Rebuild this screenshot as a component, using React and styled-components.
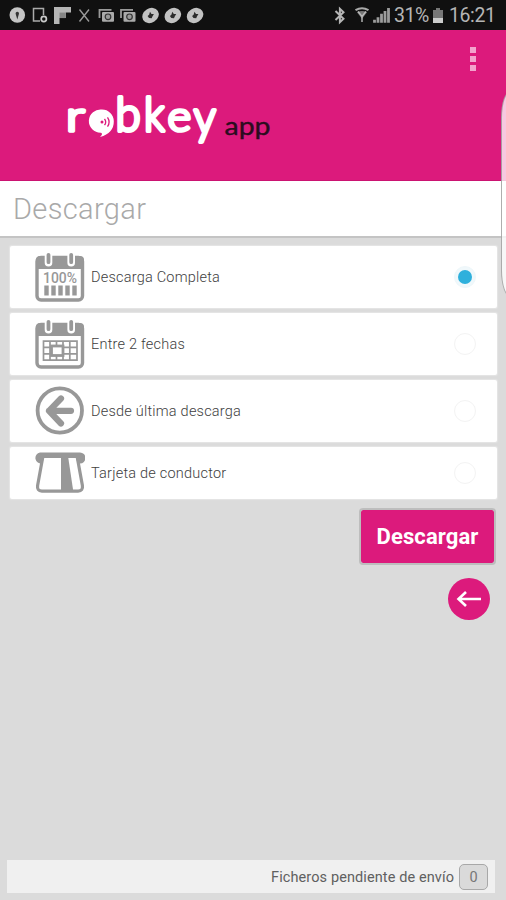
import React, { useState } from "react";
import styled, { createGlobalStyle } from "styled-components";

const GlobalStyle = createGlobalStyle`
  * {
    box-sizing: border-box;
  }
  body {
    margin: 0;
    background: #dbdbdb;
    font-family: Roboto, "Liberation Sans", sans-serif;
  }
`;

const Screen = styled.div`
  position: relative;
  display: flex;
  flex-direction: column;
  width: 506px;
  height: 900px;
  overflow: hidden;
  background: #dbdbdb;
`;

const StatusBar = styled.div`
  display: flex;
  justify-content: space-between;
  height: 30px;
  background: #101010;
`;

const StatusGroup = styled.div`
  display: flex;
  align-items: center;
  height: 31px;
  color: #b5b5b5;
`;

const StatusText = styled.span`
  font-size: 19.5px;
  line-height: 30px;
  letter-spacing: -0.4px;
  width: ${props => props.$width};
  margin-right: ${props => props.$gap};
  white-space: nowrap;
`;

const Header = styled.header`
  display: flex;
  justify-content: space-between;
  align-items: flex-start;
  height: 151px;
  padding: 15px 26px 0 60px;
  background: #dc1a7c;
  border-bottom: 1px solid #cb1371;
`;

const Logo = styled.svg`
  display: block;
  margin-top: 40px;
`;

const MenuButton = styled.button`
  display: flex;
  flex-direction: column;
  gap: 3px;
  padding: 2px 4px;
  border: none;
  background: none;
`;

const MenuDot = styled.span`
  width: 6px;
  height: 6px;
  background: #f3a3cd;
`;

const TitleBar = styled.div`
  height: 57px;
  padding: 0 13px;
  background: #fff;
  border-bottom: 2px solid #c4c4c4;
`;

const Title = styled.h1`
  margin: 0;
  color: #a9a9a9;
  font-size: 29px;
  font-weight: 300;
  line-height: 56px;
  letter-spacing: 0.35px;
`;

const Options = styled.div`
  display: flex;
  flex-direction: column;
  gap: 5px;
  padding: 8px 9px 0 10px;
`;

const OptionRow = styled.div`
  display: flex;
  align-items: center;
  height: ${props => props.$height || "62px"};
  padding: 0 21px 0 25px;
  background: #fff;
  border-radius: 2px;
  box-shadow: 0 0 1px 1px #e5e5e5;
`;

const OptionIcon = styled.svg`
  flex: none;
  width: 50px;
  height: ${props => props.$height || "50px"};
  margin-right: 6px;
`;

const OptionLabel = styled.span`
  flex: 1;
  color: #3e3e3e;
  font-size: 14.5px;
  font-weight: 300;
  letter-spacing: 0.22px;
`;

const Radio = styled.span`
  display: flex;
  align-items: center;
  justify-content: center;
  width: 22px;
  height: 22px;
  border: 1px solid ${props => (props.$checked ? "#eef7fa" : "#f3f3f3")};
  border-radius: 50%;
  background: ${props => (props.$checked ? "#f0f8fb" : "#fff")};
`;

const RadioDot = styled.span`
  width: 14px;
  height: 14px;
  border-radius: 50%;
  background: #2fb0dc;
`;

const Actions = styled.div`
  display: flex;
  flex-direction: column;
  align-items: flex-end;
  padding: 9px 10px 0 0;
`;

const DownloadButton = styled.button`
  width: 137px;
  height: 57px;
  padding: 0;
  border: 2px solid #bdbdbd;
  border-radius: 4px;
  background: #dc1a7c;
  background-clip: padding-box;
  color: #fff;
  font-family: inherit;
  font-size: 22px;
  font-weight: 700;
  letter-spacing: 0.1px;
`;

const BackButton = styled.button`
  display: flex;
  align-items: center;
  justify-content: center;
  width: 42px;
  height: 42px;
  margin: 13px 6px 0 0;
  padding: 0;
  border: none;
  border-radius: 50%;
  background: #dc1a7c;
`;

const Footer = styled.footer`
  display: flex;
  align-items: center;
  justify-content: flex-end;
  height: 33px;
  margin: auto 11px 7px 7px;
  padding-right: 7px;
  background: #f0f0f0;
`;

const FooterText = styled.span`
  color: #606060;
  font-size: 14.5px;
  font-weight: 400;
  line-height: 20px;
  padding-top: 2px;
  letter-spacing: 0.1px;
`;

const Counter = styled.span`
  width: 29px;
  height: 26px;
  margin-left: 5px;
  border: 1.5px solid #a8a8a8;
  border-radius: 5px;
  background: #dadada;
  color: #777;
  font-size: 14.5px;
  line-height: 25px;
  text-align: center;
`;

// pull handle of the edge panel, floats over the right side of the screen
const EdgeHandle = styled.div`
  position: absolute;
  top: 91px;
  right: -14px;
  width: 19px;
  height: 206px;
  border: 1px solid rgba(130, 130, 130, 0.65);
  border-radius: 10px / 28px;
  background: rgba(255, 255, 255, 0.76);
`;

const GREY = "#989898";

const NotificationIcons = () => (
  <svg width="210" height="31" viewBox="0 0 210 31">
    <circle cx="17.3" cy="15" r="7.8" fill="#c4c4c4" />
    <path d="M17.3 19.5l-1.6-5.4a1.7 1.7 0 1 1 3.2 0z" fill="#333" />
    <path d="M40 21h-6.5V8.5h10V15" fill="none" stroke="#aaa" strokeWidth="1.5" />
    <circle cx="43.8" cy="19" r="2.6" fill="none" stroke="#c8c8c8" strokeWidth="1.7" />
    <path d="M54 7h17v5.6h-5.2v5.5H59.5V24H54z" fill="#b5b5b5" />
    <path d="M59.5 12.6h6v5.5h-6z" fill="#858585" />
    <path d="M79.5 9.5l9.5 12M89 9.5l-9.5 12" stroke="#999" strokeWidth="1.4" />
    {[98.5, 120].map(x => (
      <g key={x} transform={`translate(${x} 0)`}>
        <path d="M1 18V9.8h12" fill="none" stroke="#999" strokeWidth="1.8" />
        <rect x="3.5" y="12" width="12" height="9.8" rx="1" fill="#aaa" />
        <circle cx="9.5" cy="16.8" r="2.8" fill="#999" stroke="#333" strokeWidth="1.2" />
      </g>
    ))}
    {[150.5, 172.8, 195].map(x => (
      <g key={x} transform={`translate(${x} 15.5)`}>
        <ellipse rx="8.7" ry="7.2" fill="#c2c2c2" transform="rotate(-32)" />
        <path d="M-.5-3.8L1-1.4 3.4-1.4 1.8 1.2 1.2 2.8-1.5 2.6-2.9.6-1.4-.8z" fill="#2c2c2c" />
      </g>
    ))}
  </svg>
);

const SignalIcons = () => (
  <svg width="64" height="31" viewBox="0 0 64 31">
    <path d="M5.5 11l8 7.8-3.6 3.4V8.8l3.6 3.4-8 7.8" fill="none" stroke="#b5b5b5" strokeWidth="2" />
    <path d="M25.5 10.2q6.5-4 13 0" fill="none" stroke="#aaa" strokeWidth="2" />
    <path d="M27 12.2q5-2.5 10 0l-5 6.5z" fill="#777" />
    <path d="M28 11.5l4 5 4-5M32 16v6" fill="none" stroke="#bbb" strokeWidth="1.4" />
    <path d="M44.5 22.8v-3M48 22.8v-5.5M51.5 22.8v-9M55 22.8V11M58.5 22.8V8" stroke="#9c9c9c" strokeWidth="2.8" />
  </svg>
);

const Battery = styled.svg`
  margin-right: 5px;
`;

const BatteryIcon = () => (
  <Battery width="12" height="31" viewBox="0 0 12 31">
    <path d="M4 8h4v2h3v13H1V10h3z" fill="#777" />
    <path d="M1 18h10v5H1z" fill="#ccc" />
  </Battery>
);

const RobkeyLogo = () => (
  <Logo width="220" height="65" viewBox="60 85 220 65">
    <g
      fill="#fff"
      stroke="#fff"
      strokeWidth="3.6"
      strokeLinejoin="round"
      fontFamily="Lato"
      fontWeight="300"
    >
      <text transform="translate(66 131.2) scale(1.25 1)" fontSize="42">r</text>
      <text transform="translate(115.5 131.2) scale(1.06 1.1)" fontSize="43">b</text>
      <text transform="translate(144 131.2) scale(1 1.1)" fontSize="43">k</text>
      <text transform="translate(167.5 131.2) scale(1.08 1)" fontSize="42">e</text>
      <text transform="translate(193.8 133.5) scale(1.02 1.1)" fontSize="43">y</text>
    </g>
    <path d="M102 109.5a11.7 11.7 0 1 0-1 23.3q2.5 1-1 4.2 14-4 13.8-15.8A11.8 11.8 0 0 0 102 109.5z" fill="#fff" />
    <circle cx="102" cy="122" r="1.5" fill="#dc1a7c" />
    <path
      d="M104.5 118.8q2.4 3.2 0 6.4M107.5 117.3q3.2 4.7 0 9.4"
      fill="none"
      stroke="#dc1a7c"
      strokeWidth="1.3"
    />
    <text x="224.5" y="134.8" fill="#2b0c1e" stroke="#2b0c1e" strokeWidth="0.4" fontFamily="Lato" fontSize="25" textLength="46" lengthAdjust="spacingAndGlyphs">
      app
    </text>
  </Logo>
);

const CalendarFrame = () => (
  <>
    <rect x="2" y="5.5" width="45.5" height="42.5" rx="4" fill="none" stroke={GREY} strokeWidth="3.4" />
    <path d="M1 17V8q0-4 4-4h40q4 0 4 4v9z" fill={GREY} />
    <path d="M13.5 3.8v7M36.2 3.8v7" stroke="#fff" strokeWidth="7.6" strokeLinecap="round" />
    <path d="M13.5 2.8v7.4M36.2 2.8v7.4" stroke={GREY} strokeWidth="3.8" strokeLinecap="round" />
  </>
);

const FullCalendarIcon = () => (
  <OptionIcon viewBox="0 0 50 50">
    <CalendarFrame />
    <text x="8" y="31.3" fill={GREY} fontFamily="Roboto" fontSize="15.5" fontWeight="500" textLength="34" lengthAdjust="spacingAndGlyphs">
      100%
    </text>
    <path d="M11.5 33.5v10M18.5 33.5v10M25.5 33.5v10M32.5 33.5v10M39.5 33.5v10" stroke={GREY} strokeWidth="4.4" />
  </OptionIcon>
);

const DatesCalendarIcon = () => (
  <OptionIcon viewBox="0 0 50 50">
    <CalendarFrame />
    <path
      d="M8.5 22.2h33.5v19H8.5zM8.5 28.3h33.5M8.5 34.8h33.5M15 22v19M21.5 22v19M28 22v19M34.8 22v19"
      fill="none"
      stroke={GREY}
      strokeWidth="1.7"
    />
    <rect x="16.5" y="27" width="11.5" height="9.5" fill="#fff" stroke={GREY} strokeWidth="2.8" />
  </OptionIcon>
);

const LastDownloadIcon = () => (
  <OptionIcon viewBox="0 0 50 50">
    <circle cx="24.8" cy="24.5" r="22.2" fill="none" stroke={GREY} strokeWidth="3.8" />
    <path d="M36 24.8H14M26 12.5L14 24.8l12 12.7" fill="none" stroke={GREY} strokeWidth="6.2" strokeLinecap="round" strokeLinejoin="round" />
  </OptionIcon>
);

const DriverCardIcon = () => (
  <OptionIcon viewBox="0 0 50 42" $height="42px">
    <path d="M7.8 5L2.6 33.5q-.8 5.4 4.3 5.6h36.2q5.1-.2 4.3-5.6L42.2 5" fill="#fff" stroke={GREY} strokeWidth="3.2" />
    <path d="M5 .5h40a4.8 4.8 0 0 1 0 11l-2.5-.3L41 6H9l-2 5.5A5.5 5.5 0 1 1 5 .5z" fill={GREY} />
    <path d="M26 4h7l5.4 36H26z" fill={GREY} />
  </OptionIcon>
);

const options = [
  { id: "full", label: "Descarga Completa", Icon: FullCalendarIcon },
  { id: "dates", label: "Entre 2 fechas", Icon: DatesCalendarIcon },
  { id: "last", label: "Desde última descarga", Icon: LastDownloadIcon },
  { id: "driver", label: "Tarjeta de conductor", Icon: DriverCardIcon, height: "52px" }
];

const App = () => {
  const [selected, setSelected] = useState("full");

  return (
    <Screen>
      <GlobalStyle />
      <StatusBar>
        <StatusGroup>
          <NotificationIcons />
        </StatusGroup>
        <StatusGroup>
          <SignalIcons />
          <StatusText $width="35px" $gap="3px">31%</StatusText>
          <BatteryIcon />
          <StatusText $width="47px" $gap="10px">16:21</StatusText>
        </StatusGroup>
      </StatusBar>
      <Header>
        <RobkeyLogo />
        <MenuButton aria-label="Menú">
          <MenuDot />
          <MenuDot />
          <MenuDot />
        </MenuButton>
      </Header>
      <TitleBar>
        <Title>Descargar</Title>
      </TitleBar>
      <Options>
        {options.map(({ id, label, Icon, height }) => (
          <OptionRow key={id} $height={height} onClick={() => setSelected(id)}>
            <Icon />
            <OptionLabel>{label}</OptionLabel>
            <Radio $checked={selected === id}>{selected === id && <RadioDot />}</Radio>
          </OptionRow>
        ))}
      </Options>
      <Actions>
        <DownloadButton>Descargar</DownloadButton>
        <BackButton aria-label="Volver">
          <svg width="26" height="18" viewBox="0 0 26 18">
            <path d="M25 9H2.5M10 2L2.5 9l7.5 7" fill="none" stroke="#fff" strokeWidth="2.6" />
          </svg>
        </BackButton>
      </Actions>
      <Footer>
        <FooterText>Ficheros pendiente de envío</FooterText>
        <Counter>0</Counter>
      </Footer>
      <EdgeHandle />
    </Screen>
  );
};

export default App;
